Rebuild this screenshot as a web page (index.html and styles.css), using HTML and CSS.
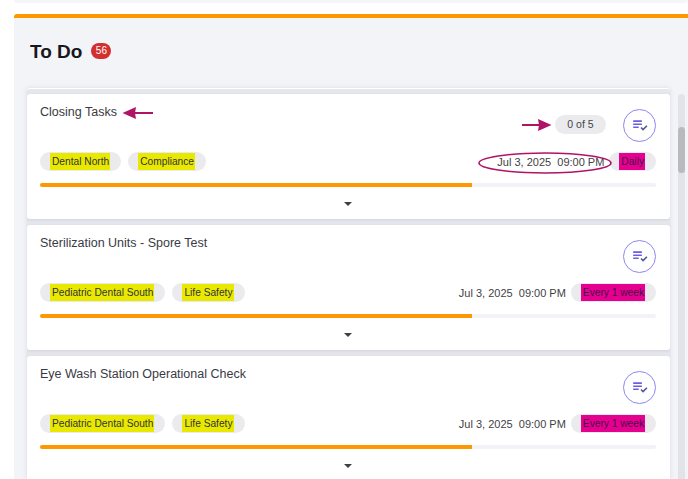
FILE: index.html
```html
<!DOCTYPE html>
<html lang="en">
<head>
<meta charset="utf-8">
<title>To Do</title>
<link rel="stylesheet" href="styles.css">
</head>
<body>
<div class="top-strip"></div>
<section class="panel">
  <header class="panel-head">
    <h2 class="panel-title">To Do</h2>
    <span class="count">56</span>
  </header>
  <div class="list-wrap">
    <div class="list">
      <article class="card">
        <div class="card-top">
          <div class="title-line">
            <h3 class="title">Closing Tasks</h3>
            <svg class="arrow-left" width="32" height="14" viewBox="0 0 32 14"><path d="M31 7H11" stroke="#b01466" stroke-width="2.2"/><path d="M0.5 7 L14 1 L13 7 L14 13Z" fill="#b01466"/></svg>
          </div>
          <div class="top-right">
            <svg class="arrow-right" width="30" height="14" viewBox="0 0 30 14"><path d="M0 7H20" stroke="#b01466" stroke-width="2.2"/><path d="M29.5 7 L16 1 L17 7 L16 13Z" fill="#b01466"/></svg>
            <span class="progress-pill">0 of 5</span>
            <button class="check-btn" type="button"><svg width="15" height="11" viewBox="0 0 16 12"><path d="M0 1.2H9.5M0 4.6H9.5M0 8H6" stroke="#6a5fe0" stroke-width="1.7" fill="none"/><path d="M8.6 8.2L10.8 10.4L15 6.2" stroke="#4c5a8c" stroke-width="1.7" fill="none"/></svg></button>
          </div>
        </div>
        <div class="card-meta">
          <div class="tags">
            <span class="tag"><mark class="hl-y">Dental North</mark></span>
            <span class="tag"><mark class="hl-y">Compliance</mark></span>
          </div>
          <div class="when">
            <span class="date">Jul 3, 2025&nbsp; 09:00 PM
              <svg class="ring" width="134" height="24" viewBox="0 0 134 24"><ellipse cx="67" cy="12" rx="66" ry="10" fill="none" stroke="#b01466" stroke-width="1.6"/></svg>
            </span>
            <span class="freq"><mark class="hl-p">Daily</mark></span>
          </div>
        </div>
        <div class="bar"><div class="bar-fill"></div></div>
        <div class="expand"><span class="caret"></span></div>
      </article>
      <article class="card">
        <div class="card-top">
          <div class="title-line"><h3 class="title">Sterilization Units - Spore Test</h3></div>
          <div class="top-right">
            <button class="check-btn" type="button"><svg width="15" height="11" viewBox="0 0 16 12"><path d="M0 1.2H9.5M0 4.6H9.5M0 8H6" stroke="#6a5fe0" stroke-width="1.7" fill="none"/><path d="M8.6 8.2L10.8 10.4L15 6.2" stroke="#4c5a8c" stroke-width="1.7" fill="none"/></svg></button>
          </div>
        </div>
        <div class="card-meta">
          <div class="tags">
            <span class="tag"><mark class="hl-y">Pediatric Dental South</mark></span>
            <span class="tag"><mark class="hl-y">Life Safety</mark></span>
          </div>
          <div class="when">
            <span class="date">Jul 3, 2025&nbsp; 09:00 PM</span>
            <span class="freq"><mark class="hl-p">Every 1 week</mark></span>
          </div>
        </div>
        <div class="bar"><div class="bar-fill"></div></div>
        <div class="expand"><span class="caret"></span></div>
      </article>
      <article class="card">
        <div class="card-top">
          <div class="title-line"><h3 class="title">Eye Wash Station Operational Check</h3></div>
          <div class="top-right">
            <button class="check-btn" type="button"><svg width="15" height="11" viewBox="0 0 16 12"><path d="M0 1.2H9.5M0 4.6H9.5M0 8H6" stroke="#6a5fe0" stroke-width="1.7" fill="none"/><path d="M8.6 8.2L10.8 10.4L15 6.2" stroke="#4c5a8c" stroke-width="1.7" fill="none"/></svg></button>
          </div>
        </div>
        <div class="card-meta">
          <div class="tags">
            <span class="tag"><mark class="hl-y">Pediatric Dental South</mark></span>
            <span class="tag"><mark class="hl-y">Life Safety</mark></span>
          </div>
          <div class="when">
            <span class="date">Jul 3, 2025&nbsp; 09:00 PM</span>
            <span class="freq"><mark class="hl-p">Every 1 week</mark></span>
          </div>
        </div>
        <div class="bar"><div class="bar-fill"></div></div>
        <div class="expand"><span class="caret"></span></div>
      </article>
    </div>
    <div class="scrollbar"><div class="thumb"></div></div>
  </div>
</section>
</body>
</html>
```
FILE: styles.css
```css
* { box-sizing: border-box; }
html, body { margin: 0; height: 479px; overflow: hidden; background: #fff; }
body { font-family: "Liberation Sans", Arial, sans-serif; color: #33333b; }
.top-strip { height: 3px; margin: 0 0 11px 14px; background: #f5f6f9; border-radius: 0 0 4px 4px; }
.panel { margin-left: 14px; height: 465px; background: #f3f4f8; border-top: 4px solid #ff9800; border-radius: 3px 0 0 0; overflow: hidden; }
.panel-head { display: flex; align-items: center; gap: 9px; height: 70px; padding: 0 0 2px 16px; }
.panel-title { margin: 0; font-size: 19px; font-weight: 700; color: #17171c; }
.count { width: 20px; height: 16px; margin-top: -2px; border-radius: 8px; background: #d32f2f; color: #fff; font-size: 10px; line-height: 16px; text-align: center; }
.list-wrap { display: flex; height: 391px; padding-left: 13px; }
.list { width: 643px; flex: none; display: flex; flex-direction: column; gap: 6px; padding-top: 5px; background: #e6e7ec; border-top: 1px solid #fff; border-radius: 3px 3px 0 0; box-shadow: 0 0 4px rgba(170,172,185,.35); overflow: hidden; }
.card { flex: none; height: 125px; padding: 10px 14px 0 13px; background: #fff; border-radius: 3px; box-shadow: 0 1px 3px rgba(150,152,170,.25); }
.card-top { display: flex; justify-content: space-between; height: 42px; }
.title-line { display: flex; align-items: center; height: 17px; }
.title { margin: 0; font-size: 12.5px; font-weight: 400; line-height: 17px; color: #3a3a44; }
.arrow-left { margin-left: 5px; }
.top-right { display: flex; align-items: center; align-self: flex-start; height: 34px; margin-top: 4px; }
.arrow-right { margin-right: 3px; margin-top: -1px; }
.progress-pill { width: 51px; height: 19px; margin-right: 17px; margin-top: -1px; border-radius: 10px; background: #ebebee; font-size: 10.5px; line-height: 19px; text-align: center; color: #44444c; }
.check-btn { display: flex; align-items: center; justify-content: center; width: 33px; height: 33px; padding: 0 0 0 2px; background: #fff; border: 1px solid #8f85f0; border-radius: 50%; }
.card-meta { display: flex; justify-content: space-between; align-items: center; height: 19px; margin-top: 6px; }
.tags { display: flex; gap: 7px; }
.tag { display: flex; height: 19px; padding: 0 12px; align-items: center; border-radius: 10px; background: #ebebee; font-size: 10.2px; }
mark { color: #33333b; line-height: 17px; padding: 0 1px 0 2px; margin: 0 -1px 0 -2px; }
.hl-y { background: #e9e900; }
.hl-p { background: #e6008f; color: #46104a; }
.when { display: flex; align-items: center; gap: 5px; }
.date { position: relative; font-size: 11px; color: #3f3f46; white-space: nowrap; }
.ring { position: absolute; left: -19px; top: -5px; }
.freq { display: flex; align-items: center; height: 19px; padding: 0 12px; border-radius: 10px; background: #ebebee; font-size: 10.2px; }
.bar { height: 4px; margin-top: 12px; background: #f2f3f6; border-radius: 2px; overflow: hidden; }
.bar-fill { width: 70.13%; height: 100%; background: #ff9800; }
.expand { display: flex; justify-content: center; align-items: center; height: 32px; padding-top: 1px; }
.caret { width: 0; height: 0; border-left: 4.5px solid transparent; border-right: 4.5px solid transparent; border-top: 4.5px solid #3f3f46; }
.scrollbar { flex: none; width: 7px; margin: 6px 0 0 8px; background: #e2e3e8; border-radius: 4px 4px 0 0; }
.thumb { width: 7px; height: 46px; margin-top: 33px; background: #b9babd; border-radius: 4px; }
```
